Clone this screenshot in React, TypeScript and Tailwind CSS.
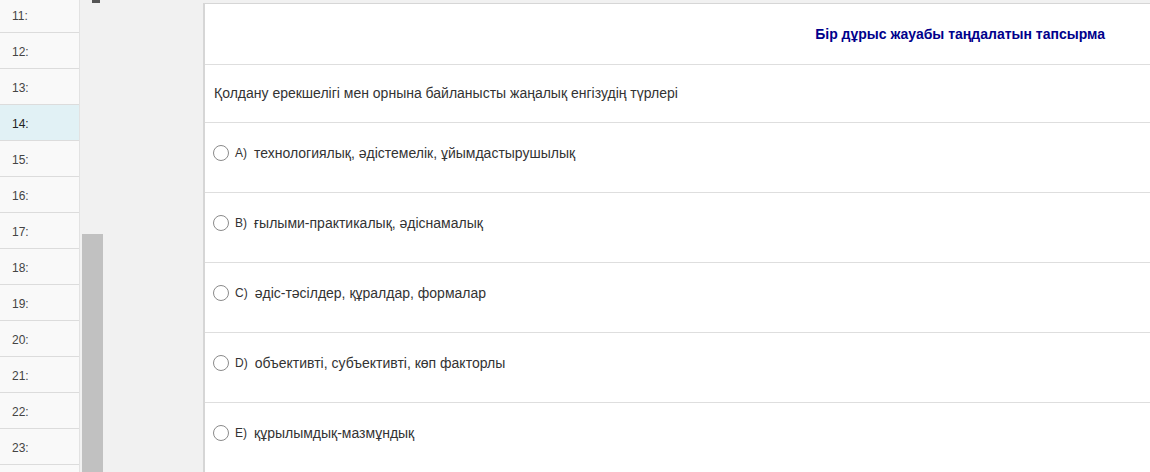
import React from "react";

const rows = [11, 12, 13, 14, 15, 16, 17, 18, 19, 20, 21, 22, 23];
const options = [
  ["A)", "технологиялық, әдістемелік, ұйымдастырушылық"],
  ["B)", "ғылыми-практикалық, әдіснамалық"],
  ["C)", "әдіс-тәсілдер, құралдар, формалар"],
  ["D)", "объективті, субъективті, көп факторлы"],
  ["E)", "құрылымдық-мазмұндық"],
];

export default function App() {
  return (
    <div
      className="flex h-[472px] w-[1150px] overflow-hidden bg-[#f1f1f1] text-[14px] text-[#333]"
      style={{ fontFamily: '"Liberation Sans", Arial, sans-serif' }}
    >
      <div className="flex w-[80px] shrink-0 flex-col border-r border-[#e2e2e2] bg-[#f9f9f9] -mt-[3px]">
        {rows.map((n) => (
          <div
            key={n}
            className={`flex h-[36px] shrink-0 items-center border-b border-[#dcdcdc] pl-[12px] pt-[3px] text-[12px] ${
              n === 14 ? "bg-[#e1f1f5] text-[#222]" : "text-[#444]"
            }`}
          >
            {n}:
          </div>
        ))}
      </div>
      <div className="relative w-[123px] shrink-0 bg-[#f1f1f1]">
        <div className="absolute left-[12px] top-0 h-[3px] w-[8px] bg-[#555]" />
        <div className="absolute left-[2px] top-[234px] bottom-0 w-[21px] bg-[#c1c1c1]" />
      </div>
      <div className="mt-[3px] flex flex-1 flex-col border-l-2 border-t border-[#d6d6d6] bg-white">
        <div className="flex h-[61px] shrink-0 items-center justify-end border-b border-[#dedede] pr-[45px]">
          <span className="text-[14px] font-bold text-[#00008b]">
            Бір дұрыс жауабы таңдалатын тапсырма
          </span>
        </div>
        <div className="flex h-[58px] shrink-0 items-center border-b border-[#dedede] pl-[9px]">
          Қолдану ерекшелігі мен орнына байланысты жаңалық енгізудің түрлері
        </div>
        {options.map(([l, t]) => (
          <div
            key={l}
            className="flex h-[70px] shrink-0 items-start border-b border-[#dedede] pl-[8px] pt-[22px] leading-[16px]"
          >
            <span className="h-[16px] w-[16px] shrink-0 rounded-full border border-[#8a8a8a] bg-white" />
            <span className="ml-[6px] text-[12px] text-[#333]">{l}</span>
            <span className="ml-[7px]">{t}</span>
          </div>
        ))}
      </div>
    </div>
  );
}
